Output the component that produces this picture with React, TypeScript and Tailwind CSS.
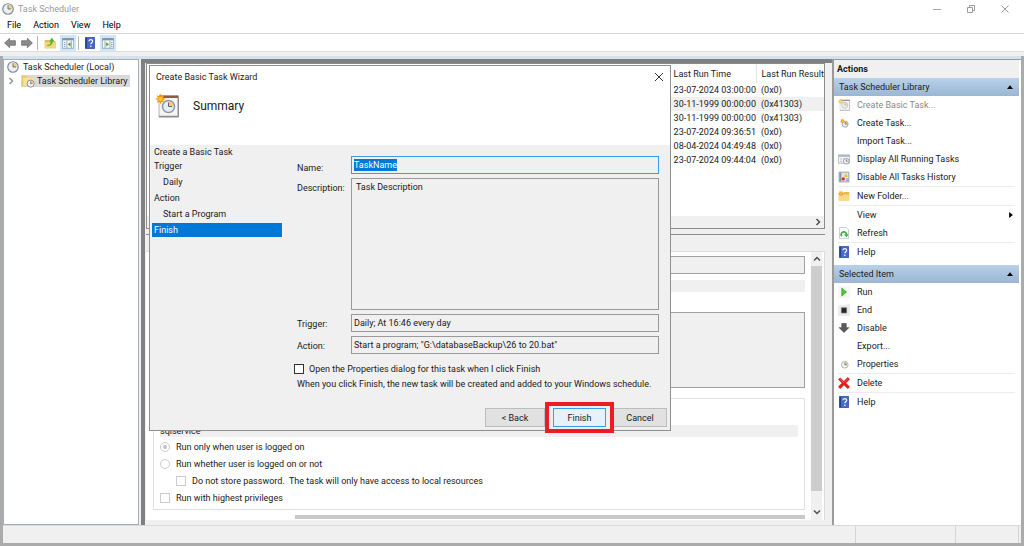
import type { ReactNode } from "react";

interface IconProps {
  className?: string;
}

function ClockIcon({ className = "size-3" }: IconProps) {
  return (
    <svg viewBox="0 0 16 16" className={className} aria-hidden="true">
      <circle cx="8" cy="8" r="7" fill="#e9eff5" stroke="#7f8b97" strokeWidth="1.6" />
      <path d="M8 8V2.2A5.8 5.8 0 0 1 13.8 8Z" fill="#f3cf7c" />
      <path d="M8 3v5h4" fill="none" stroke="#55606c" strokeWidth="1.1" />
    </svg>
  );
}

function FolderClockIcon({ className = "size-3.5" }: IconProps) {
  return (
    <svg viewBox="0 0 16 16" className={className} aria-hidden="true">
      <path d="M1 2h5l1 1.500h7V14H1Z" fill="#e9c56b" />
      <path d="M2.500 4H14.500v9.500H2.500Z" fill="#f7e09c" />
      <circle cx="11" cy="11" r="4" fill="#eef2f6" stroke="#78838e" />
      <path d="M11 11V7.800A3.200 3.200 0 0 1 14.200 11Z" fill="#f1c768" />
      <path d="M11 8.500V11h2" fill="none" stroke="#59636e" strokeWidth=".8" />
    </svg>
  );
}

function Burst({ x, y, r }: { x: number; y: number; r: number }) {
  return (
    <g transform={`translate(${x} ${y}) scale(${r / 5})`}>
      <path
        d="M0-5 1-2.400 3.500-3.500 2.400-1 5 0 2.400 1 3.500 3.500 1 2.400 0 5-1 2.400-3.500 3.500-2.400 1-5 0-2.400-1-3.500-3.500-1-2.400Z"
        fill="#f29a16"
      />
      <circle r="1.900" fill="#ffc53a" />
    </g>
  );
}

function WizardIcon({ className = "size-6" }: IconProps) {
  return (
    <svg viewBox="0 0 24 24" className={className} aria-hidden="true">
      <path d="M4 2h19v21H4Z" fill="#f5f5f5" stroke="#b5b5b5" />
      <path d="M4 1.500h19.500V4H4Z" fill="#8c5a4c" />
      <path d="M4 22.500h19.500V4" fill="none" stroke="#8e8e8e" strokeWidth="1.500" />
      <circle cx="13.500" cy="12.500" r="6" fill="#e6edf4" stroke="#8b98a6" strokeWidth="1.500" />
      <path d="M13.500 12.500V7.500a5 5 0 0 1 5 5Z" fill="#f2cc78" />
      <path d="M13.500 8.500v4h3.500" fill="none" stroke="#5a6470" />
      <Burst x={5.500} y={5} r={5.500} />
    </svg>
  );
}

function NewTaskIcon() {
  return (
    <svg viewBox="0 0 16 16" className="size-3" aria-hidden="true">
      <circle cx="9.500" cy="9.500" r="4" fill="#e9eff5" stroke="#8793a0" />
      <path d="M9.500 9.500V5.500a4 4 0 0 1 4 4Z" fill="#efb957" />
      <path d="M9.500 6.500v3h3" fill="none" stroke="#59636e" strokeWidth=".8" />
      <Burst x={6} y={5.500} r={3.500} />
    </svg>
  );
}

function SmallClockIcon() {
  return (
    <svg viewBox="0 0 16 16" className="size-3" aria-hidden="true">
      <circle cx="9" cy="9" r="4.500" fill="#eef2f6" stroke="#9aa5b0" />
      <path d="M9 9V5a4 4 0 0 1 4 4Z" fill="#f1c768" />
      <path d="M9 6v3h3" fill="none" stroke="#59636e" strokeWidth=".9" />
    </svg>
  );
}

function RunningTasksIcon() {
  return (
    <svg viewBox="0 0 16 16" className="size-3" aria-hidden="true">
      <path d="M.5 2.500h15v11H.5Z" fill="#f4f4f4" stroke="#a0a7ae" />
      <path d="M1 3h14v2H1Z" fill="#9fabb8" />
      <path d="M3 8h2M3 11h2M6.500 8h2" stroke="#9aa0a6" />
      <circle cx="11" cy="11" r="3.800" fill="#eef2f6" stroke="#838e99" />
      <path d="M11 8.500V11h2" fill="none" stroke="#7a5a46" />
    </svg>
  );
}

function HistoryIcon() {
  return (
    <svg viewBox="0 0 16 16" className="size-3" aria-hidden="true">
      <path d="M1.500 1.500h13v13h-13Z" fill="#dfe7f2" stroke="#7c8896" />
      <path d="M2 2h2.500v12H2Z" fill="#8995a3" />
      <path d="M10.500 2.500 13.500 8h-6Z" fill="#f2c43a" />
      <circle cx="7" cy="10.500" r="2.300" fill="#d0392e" />
      <path d="M10.500 10.500h3M10.500 12.500h3" stroke="#6f86b5" />
    </svg>
  );
}

function NewFolderIcon() {
  return (
    <svg viewBox="0 0 16 16" className="size-3" aria-hidden="true">
      <path d="M1 4h6l1-1.500h7V14H1Z" fill="#e6b84f" />
      <path d="M1 6h14v8H1Z" fill="#f6d988" />
      <Burst x={4} y={4.500} r={4} />
    </svg>
  );
}

function RefreshIcon() {
  return (
    <svg viewBox="0 0 16 16" className="size-3" aria-hidden="true">
      <path d="M2 .5h9l3 3v12H2Z" fill="#fafafa" stroke="#b9bdc1" />
      <path d="M5 12.300a3.600 3.600 0 1 1 6.400-2.300" fill="none" stroke="#3fa845" strokeWidth="2.200" />
      <path d="M8 9.500h6l-2.500 4.300Z" fill="#3fa845" />
    </svg>
  );
}

function HelpIcon() {
  return (
    <svg viewBox="0 0 16 16" className="size-3" aria-hidden="true">
      <path d="M2 .5h12v15H2Z" fill="#4468cc" stroke="#2c479c" />
      <path d="M2 1h2v14H2Z" fill="#23408f" />
      <path d="M6.500 5.800c0-3.200 5-3.200 5-.2 0 2-2.400 2-2.400 4.200" fill="none" stroke="#fff" strokeWidth="1.600" />
      <circle cx="9.100" cy="12.300" r="1.100" fill="#fff" />
    </svg>
  );
}

function PlayIcon() {
  return (
    <svg viewBox="0 0 16 16" className="size-3" aria-hidden="true">
      <path d="M0 0h16v16H0Z" fill="#f6f6f6" />
      <path d="M5 2.500 11.500 8 5 13.500Z" fill="#4cc435" stroke="#2fa01f" strokeWidth=".8" />
    </svg>
  );
}

function StopIcon() {
  return (
    <svg viewBox="0 0 16 16" className="size-3" aria-hidden="true">
      <path d="M0 2 16 0v16H0Z" fill="#ececec" />
      <path d="M4.500 5h7v7h-7Z" fill="#262626" stroke="#777" />
    </svg>
  );
}

function DownIcon() {
  return (
    <svg viewBox="0 0 16 16" className="size-3" aria-hidden="true">
      <path d="M5 2h6v5.500h3.500L8 14 1.500 7.500H5Z" fill="#5a5a5a" stroke="#444" strokeWidth=".8" />
    </svg>
  );
}

function DeleteIcon() {
  return (
    <svg viewBox="0 0 16 16" className="size-3" aria-hidden="true">
      <path d="M1.500 2 14.500 14.500M14.500 1.500 1.500 14.500" stroke="#dc2019" strokeWidth="4" />
      <path d="M2 2 8 7.500 13.500 2" fill="none" stroke="#ef6a60" strokeWidth="1.200" />
    </svg>
  );
}

function ArrowIcon({ className = "" }: IconProps) {
  return (
    <svg viewBox="0 0 16 16" className={`size-3 ${className}`} aria-hidden="true">
      <path d="M.8 8 7.500 1.800V5h7.700v6H7.500v3.200Z" fill="#8b8b8b" stroke="#6a6a6a" />
    </svg>
  );
}

function UpFolderIcon() {
  return (
    <svg viewBox="0 0 16 16" className="size-3" aria-hidden="true">
      <path d="M1 4h6l1 1.500h7.500V15H1Z" fill="#e3bc55" />
      <path d="M1 7h14.500v8H1Z" fill="#f3d67d" />
      <path d="M4 11c3.500 0 5-2 5-5H6.500l4-5 3.500 5h-2.500c0 4-3 6-7.500 6Z" fill="#4cb52e" />
    </svg>
  );
}

function PaneIcon({ side }: { side: "left" | "right" }) {
  return (
    <svg viewBox="0 0 16 16" className="size-3" aria-hidden="true">
      <path d="M.5 2h15v13H.5Z" fill="#f7f9fb" stroke="#8a96a3" />
      <path d="M.5 1.500h15v3H.5Z" fill="#8695a5" />
      {side === "left" ? (
        <>
          <path d="M6.500 5v10M12.500 5v10" stroke="#8a96a3" />
          <path d="M2.500 7.500h2M2.500 10h2M2.500 12.500h2" stroke="#4f7fc0" />
          <path d="M11.500 7v5.500L7.500 9.800Z" fill="#3fae35" />
        </>
      ) : (
        <>
          <path d="M4 5v10M10.500 5v10" stroke="#8a96a3" />
          <path d="M12 7.500h2M12 10h2M12 12.500h2" stroke="#4f7fc0" />
          <path d="M5.500 7v5.500l4-2.700Z" fill="#3fae35" />
        </>
      )}
    </svg>
  );
}

function Chevron({ className = "" }: IconProps) {
  return (
    <svg viewBox="0 0 8 8" className={`size-2 ${className}`} aria-hidden="true">
      <path d="M1 5.500 4 2.500 7 5.500" fill="none" stroke="#505050" strokeWidth="1.500" />
    </svg>
  );
}

interface Action {
  label: string;
  icon?: ReactNode;
  disabled?: boolean;
  submenu?: boolean;
  divider?: boolean;
}

const LIBRARY_ACTIONS: Action[] = [
  { label: "Create Basic Task...", icon: <WizardIcon className="size-3 opacity-70" />, disabled: true },
  { label: "Create Task...", icon: <NewTaskIcon /> },
  { label: "Import Task..." },
  { label: "Display All Running Tasks", icon: <RunningTasksIcon /> },
  { label: "Disable All Tasks History", icon: <HistoryIcon />, divider: true },
  { label: "New Folder...", icon: <NewFolderIcon />, divider: true },
  { label: "View", submenu: true },
  { label: "Refresh", icon: <RefreshIcon />, divider: true },
  { label: "Help", icon: <HelpIcon /> },
];

const ITEM_ACTIONS: Action[] = [
  { label: "Run", icon: <PlayIcon /> },
  { label: "End", icon: <StopIcon /> },
  { label: "Disable", icon: <DownIcon /> },
  { label: "Export..." },
  { label: "Properties", icon: <SmallClockIcon />, divider: true },
  { label: "Delete", icon: <DeleteIcon />, divider: true },
  { label: "Help", icon: <HelpIcon /> },
];

const RUNS = [
  ["23-07-2024 03:00:00", "(0x0)"],
  ["30-11-1999 00:00:00", "(0x41303)"],
  ["30-11-1999 00:00:00", "(0x41303)"],
  ["23-07-2024 09:36:51", "(0x0)"],
  ["08-04-2024 04:49:48", "(0x0)"],
  ["23-07-2024 09:44:04", "(0x0)"],
];

const STEPS = [
  { label: "Create a Basic Task" },
  { label: "Trigger" },
  { label: "Daily", nested: true },
  { label: "Action" },
  { label: "Start a Program", nested: true },
  { label: "Finish", current: true },
];

function ActionGroup({ title, actions }: { title: string; actions: Action[] }) {
  return (
    <section>
      <h3 className="flex h-[18px] items-center justify-between bg-linear-to-b from-[#b9d1e9] to-[#9bb6d4] pr-1.5 pl-[5px]">
        {title}
        <svg viewBox="0 0 8 5" className="h-1 w-1.5" aria-hidden="true">
          <path d="M0 5 4 0l4 5Z" fill="#000" />
        </svg>
      </h3>
      <ul>
        {actions.map((a) => (
          <li key={a.label} className={a.divider ? "mr-1 ml-1 border-b border-[#ececec]" : "mr-1 ml-1"}>
            <button
              type="button"
              disabled={a.disabled}
              className="flex h-[18px] w-full items-center gap-[7px] text-left disabled:text-[#8a8a8a]"
            >
              <span className="size-3 shrink-0">{a.icon}</span>
              <span className="grow">{a.label}</span>
              {a.submenu && (
                <svg viewBox="0 0 5 8" className="mr-0.5 h-1.5 w-1" aria-hidden="true">
                  <path d="M0 0 5 4 0 8Z" fill="#000" />
                </svg>
              )}
            </button>
          </li>
        ))}
      </ul>
    </section>
  );
}

function TitleBar() {
  return (
    <header className="flex h-[17px] items-center bg-white pl-0.5 text-[#9a9a9a]">
      <ClockIcon />
      <h1 className="ml-1">Task Scheduler</h1>
      <div className="ml-auto flex h-full items-center gap-6 pr-3.5">
        <button type="button" aria-label="Minimize">
          <svg viewBox="0 0 10 10" className="size-2.5" aria-hidden="true">
            <path d="M1 5.500h8" stroke="#a5a5a5" />
          </svg>
        </button>
        <button type="button" aria-label="Restore">
          <svg viewBox="0 0 10 10" className="size-2.5" aria-hidden="true">
            <path d="M1.500 3.500h5v5h-5ZM3.500 3.500v-2h5v5h-2" fill="none" stroke="#9a9a9a" />
          </svg>
        </button>
        <button type="button" aria-label="Close">
          <svg viewBox="0 0 10 10" className="size-2.5" aria-hidden="true">
            <path d="m1.500 1.500 7 7m0-7-7 7" stroke="#9a9a9a" />
          </svg>
        </button>
      </div>
    </header>
  );
}

function Toolbar() {
  return (
    <div className="flex h-[18px] items-center border-b border-[#dedede] bg-white pl-1">
      <button type="button" aria-label="Back">
        <ArrowIcon />
      </button>
      <button type="button" aria-label="Forward" className="ml-[5px]">
        <ArrowIcon className="rotate-180" />
      </button>
      <span className="ml-1 h-3.5 w-px bg-[#b5b5b5]" />
      <button type="button" aria-label="Up one level" className="ml-1.5">
        <UpFolderIcon />
      </button>
      <button type="button" aria-label="Console tree" className="ml-1 flex size-4 items-center justify-center bg-[#cce8ff]">
        <PaneIcon side="left" />
      </button>
      <span className="ml-0.5 h-3.5 w-px bg-[#b5b5b5]" />
      <button type="button" aria-label="Help" className="ml-[5px]">
        <HelpIcon />
      </button>
      <button type="button" aria-label="Action pane" className="ml-1 flex size-4 items-center justify-center bg-[#cce8ff]">
        <PaneIcon side="right" />
      </button>
    </div>
  );
}

function TaskList() {
  return (
    <section className="flex h-[166px] flex-col border border-[#8b8b8b] bg-white">
      <table className="ml-auto border-collapse text-left whitespace-nowrap">
        <thead>
          <tr className="h-[19px]">
            <th className="w-[87px] border-r border-[#e5e5e5] pl-[5px] font-normal">Last Run Time</th>
            <th className="w-[68px] pl-[5px] font-normal">Last Run Result</th>
          </tr>
        </thead>
        <tbody>
          {RUNS.map(([time, result], i) => (
            <tr key={i} className={i === 1 ? "h-3.5 bg-[#f0f0f0]" : "h-3.5"}>
              <td className="pl-[5px]">{time}</td>
              <td className="pl-[5px]">{result}</td>
            </tr>
          ))}
        </tbody>
      </table>
      <div className="mt-auto flex h-3 items-center justify-end bg-[#f0f0f0] pr-0.5">
        <Chevron className="rotate-90" />
      </div>
    </section>
  );
}

function TaskDetails() {
  return (
    <section className="mt-[5px] flex grow flex-col border-t border-[#8b8b8b] bg-[#f0f0f0] pt-4">
      <div className="flex grow border-t border-r border-[#dcdcdc] bg-white">
        <div className="flex grow flex-col pt-1 pr-1.5 pl-[7px]">
          <div className="h-[18px] border border-[#a0a0a0] bg-[#f0f0f0]" />
          <div className="mt-1.5 h-3 bg-[#f0f0f0]" />
          <div className="mt-5 h-[76px] border border-[#a0a0a0] bg-[#f0f0f0]" />
          <fieldset className="mt-[10px] h-[112px] border border-[#e0e0e0] px-1.5 pt-[26px]">
            <p className="h-3 bg-[#f0f0f0] leading-3">sqlservice</p>
            <label className="mt-0.5 flex h-4 items-center gap-1.5">
              <input
                type="radio"
                name="logon"
                defaultChecked
                disabled
                className="size-2.5 appearance-none rounded-full border border-[#cccccc] bg-[#c4c4c4] bg-clip-content p-0.5"
              />
              Run only when user is logged on
            </label>
            <label className="flex h-[17px] items-center gap-1.5">
              <input
                type="radio"
                name="logon"
                disabled
                className="size-2.5 appearance-none rounded-full border border-[#cccccc]"
              />
              Run whether user is logged on or not
            </label>
            <label className="ml-4 flex h-[17px] items-center gap-1.5 whitespace-pre">
              <input type="checkbox" disabled className="size-2.5 appearance-none border border-[#cccccc]" />
              {"Do not store password.  The task will only have access to local resources"}
            </label>
            <label className="flex h-[18px] items-center gap-1.5">
              <input type="checkbox" disabled className="size-2.5 appearance-none border border-[#cccccc]" />
              Run with highest privileges
            </label>
          </fieldset>
          <div className="mt-[5px] ml-[142px] h-1 bg-[#c9c9c9]" />
        </div>
        <div className="flex w-[11px] flex-col items-center bg-[#f0f0f0]">
          <Chevron className="my-[3px]" />
          <div className="w-full grow bg-[#cdcdcd]" />
          <Chevron className="mt-[17px] mb-1 rotate-180" />
        </div>
        <div className="w-0.5" />
      </div>
    </section>
  );
}

function WizardDialog() {
  return (
    <div
      role="dialog"
      aria-label="Create Basic Task Wizard"
      className="absolute top-[65px] left-[149px] flex h-[366px] w-[522px] flex-col border border-[#8f8f8f] bg-[#f0f0f0]"
    >
      <div className="h-[79px] bg-white">
        <div className="flex h-[22px] items-center justify-between pr-1.5 pl-1.5">
          <h2>Create Basic Task Wizard</h2>
          <button type="button" aria-label="Close wizard">
            <svg viewBox="0 0 10 10" className="size-2.5" aria-hidden="true">
              <path d="m1 1 8 8m0-8-8 8" stroke="#333" />
            </svg>
          </button>
        </div>
        <div className="flex h-9 items-center gap-3.5 pl-[5px]">
          <WizardIcon />
          <h3 className="text-xs">Summary</h3>
        </div>
      </div>

      <div className="flex grow">
        <ol className="w-[142px] pl-0.5">
          {STEPS.map((s) => (
            <li key={s.label} className="flex h-4 items-center first:h-[13px]">
              <span
                aria-current={s.current ? "step" : undefined}
                className={
                  s.current
                    ? "w-[130px] bg-[#0078d7] pl-0.5 leading-[14px] text-white"
                    : s.nested
                      ? "pl-[11px]"
                      : "pl-0.5"
                }
              >
                {s.label}
              </span>
            </li>
          ))}
        </ol>

        <form className="flex grow flex-col pt-[11px] pr-[11px]" onSubmit={(e) => e.preventDefault()}>
          <div className="grid grid-cols-[54px_1fr] gap-y-1 pl-[5px]">
            <label htmlFor="name" className="pt-1.5">
              Name:
            </label>
            <div className="flex h-[18px] items-center border border-[#3d9be9] px-0.5">
              <input
                id="name"
                readOnly
                defaultValue="TaskName"
                className="field-sizing-content h-3 bg-[#0078d7] text-white outline-none"
              />
            </div>
            <label htmlFor="description" className="pt-1">
              Description:
            </label>
            <textarea
              id="description"
              readOnly
              defaultValue="Task Description"
              className="h-[132px] resize-none border border-[#9a9a9a] px-1 pt-0.5"
            />
            <label htmlFor="trigger" className="pt-1">
              Trigger:
            </label>
            <input
              id="trigger"
              readOnly
              defaultValue="Daily; At 16:46 every day"
              className="h-[18px] border border-[#9a9a9a] px-0.5"
            />
            <label htmlFor="action" className="pt-1">
              Action:
            </label>
            <input
              id="action"
              readOnly
              defaultValue={'Start a program; "G:\\databaseBackup\\26 to 20.bat"'}
              className="h-[18px] border border-[#9a9a9a] px-0.5"
            />
          </div>
          <label className="mt-2 flex h-3.5 items-center gap-[5px] pl-0.5">
            <input type="checkbox" className="size-2.5 appearance-none border border-[#333] bg-white" />
            Open the Properties dialog for this task when I click Finish
          </label>
          <p className="pl-[5px] leading-4 whitespace-nowrap">
            When you click Finish, the new task will be created and added to your Windows schedule.
          </p>
        </form>
      </div>

      <div className="flex justify-end pr-[3px] pb-[3px]">
        <button type="button" className="h-[19px] w-[60px] border border-[#bcbcbc] bg-[#e1e1e1]">
          &lt; Back
        </button>
        <div className="-my-[6px] border-4 border-[#ed1c24] bg-[#f0f0f0] px-1 py-0.5">
          <button type="submit" className="h-[19px] w-[53px] border border-[#3d9be9] bg-[#e5f1fb]">
            Finish
          </button>
        </div>
        <button type="button" className="h-[19px] w-[53px] border border-l-0 border-[#bcbcbc] bg-[#e1e1e1]">
          Cancel
        </button>
      </div>
    </div>
  );
}

export default function App() {
  return (
    <div className="relative flex min-h-screen flex-col border-b-[3px] border-[#ababab] bg-[#f0f0f0] font-['Roboto',sans-serif] text-[9px] leading-3 text-[#1a1a1a]">
      <TitleBar />
      <nav className="flex h-[17px] items-center gap-3 border-b border-[#d5d5d5] bg-white pl-[7px] text-black">
        <button type="button">File</button>
        <button type="button">Action</button>
        <button type="button">View</button>
        <button type="button">Help</button>
      </nav>
      <Toolbar />

      <div className="mt-1 flex grow flex-col border-x-[3px] border-[#ababab]">
        <div className="h-[3px] bg-[#d5e2ee]" />
        <div className="flex grow">
          <aside className="w-[136px] border border-[#a5adb5] bg-white pl-[3px]">
            <div className="flex h-3.5 items-center gap-1">
              <ClockIcon />
              Task Scheduler (Local)
            </div>
            <div className="flex h-3.5 items-center">
              <Chevron className="rotate-90 opacity-60" />
              <span className="ml-1.5 flex h-3 items-center gap-0.5 bg-[#d9d9d9] pr-0.5">
                <FolderClockIcon />
                Task Scheduler Library
              </span>
            </div>
          </aside>

          <main className="ml-0.5 flex grow flex-col border-t-4 border-l-4 border-[#808080] pr-[7px] pb-[5px] pl-px">
            <TaskList />
            <TaskDetails />
          </main>

          <aside className="w-[189px] border-t border-l-2 border-[#9b9b9b] bg-white pr-0.5">
            <h2 className="h-[18px] bg-[#f0f0f0] pl-[3px] leading-[18px] font-bold">Actions</h2>
            <ActionGroup title="Task Scheduler Library" actions={LIBRARY_ACTIONS} />
            <div className="h-1" />
            <ActionGroup title="Selected Item" actions={ITEM_ACTIONS} />
          </aside>
        </div>
        <footer className="flex h-[18px] justify-end border-t border-[#dadada] pr-0.5">
          <span className="w-[100px] border-l border-[#d4d4d4]" />
          <span className="w-16 border-x border-[#d4d4d4]" />
        </footer>
      </div>

      <WizardDialog />
    </div>
  );
}
